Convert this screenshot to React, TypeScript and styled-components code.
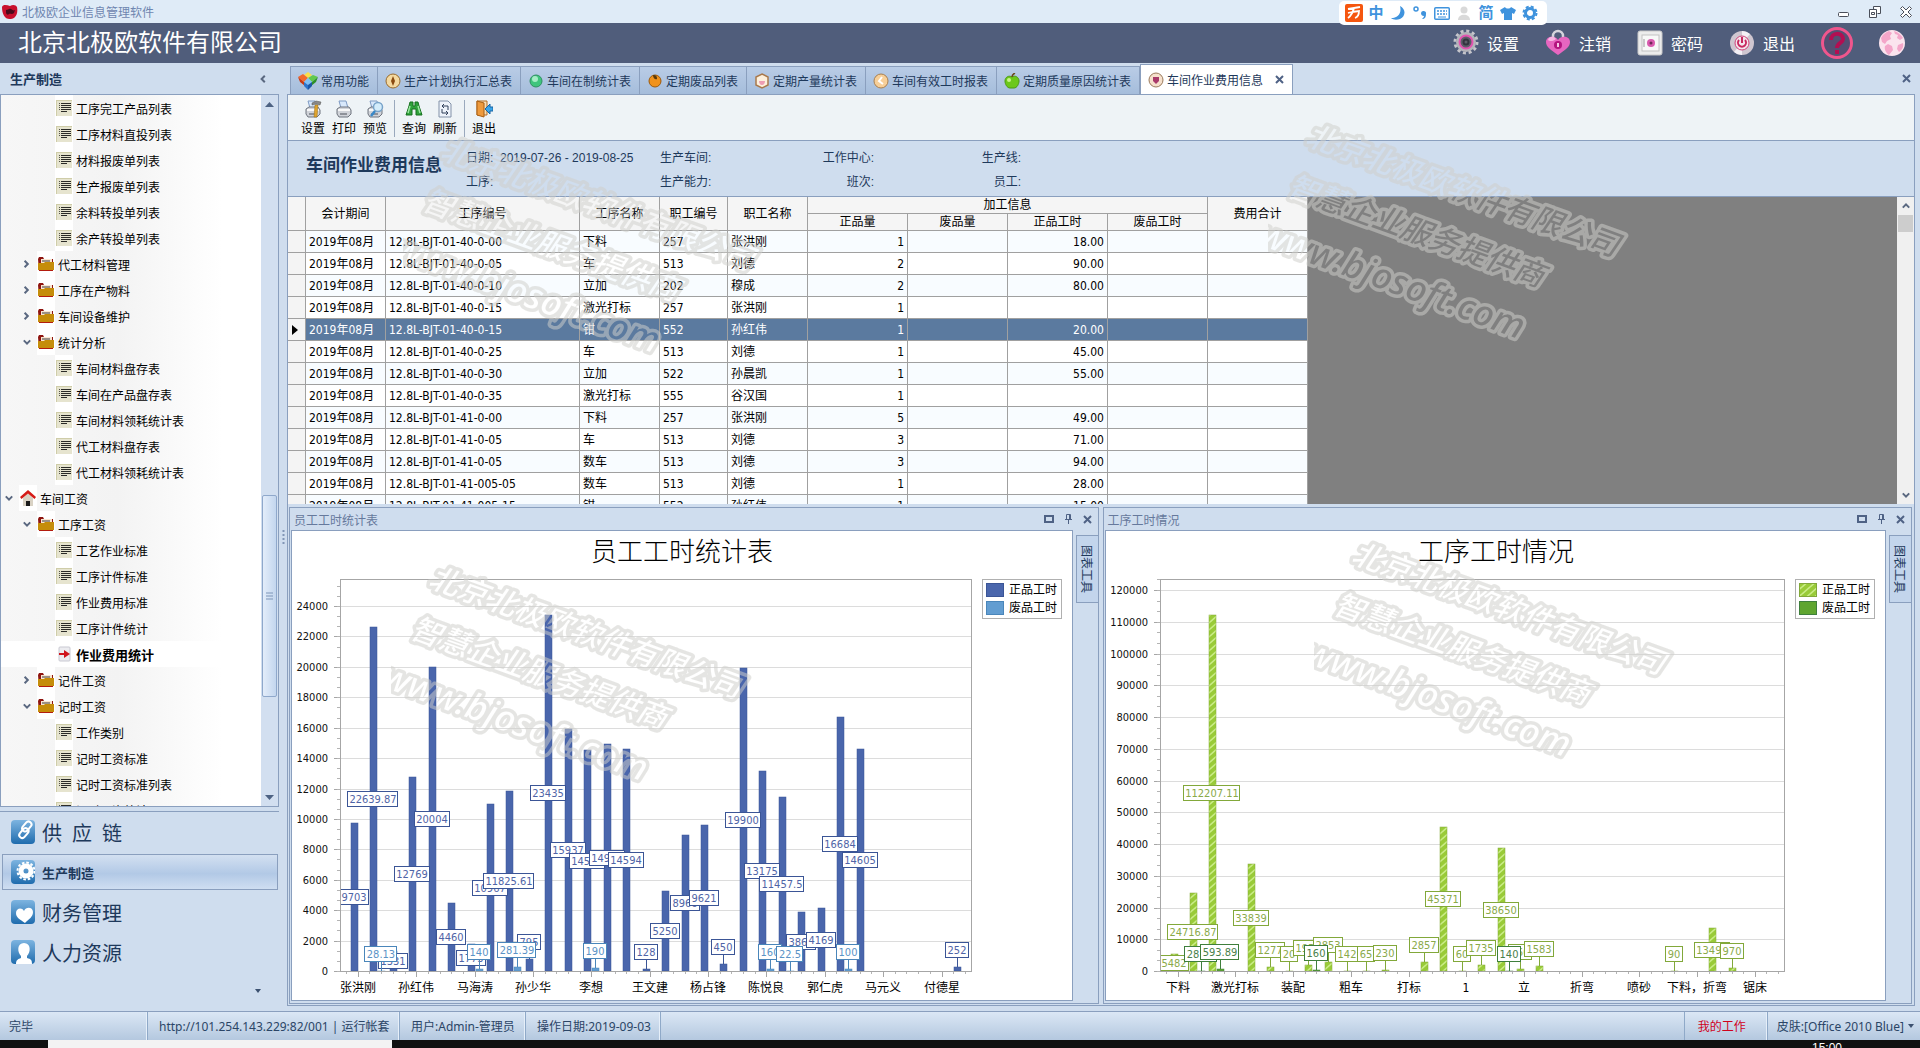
import React, { useLayoutEffect, useRef, useState } from 'react';
import styled, { createGlobalStyle, css } from 'styled-components';

const uiFont = '"Liberation Sans", "Noto Sans CJK SC", sans-serif';
const dataFont = '"DejaVu Sans Condensed", "Noto Sans", "Noto Sans CJK SC", sans-serif';
const line = '#8a9fbe';
const panelBlue = '#cfddee';
const ink = '#1e395b';

const GlobalStyle = createGlobalStyle`
  *, *::before, *::after { box-sizing: border-box; }
  body { margin: 0; background: ${panelBlue}; font-family: ${uiFont}; font-size: 12px; color: ${ink}; overflow: hidden; }
  button { font: inherit; color: inherit; background: none; border: 0; padding: 0; margin: 0; cursor: default; white-space: nowrap; }
  ul { list-style: none; margin: 0; padding: 0; }
  svg { display: block; flex: none; }
`;

const Page = styled.div`
  position: relative;
  height: 100vh;
  display: flex;
  flex-direction: column;
  overflow: hidden;
`;

/* ---------- title bar ---------- */
const TitleBar = styled.div`
  flex: none;
  height: 23px;
  display: flex;
  align-items: center;
  justify-content: space-between;
  padding: 0 8px 0 2px;
  background: #dfebf7;
  color: #6f86b0;
`;
const AppName = styled.div`
  display: flex;
  align-items: center;
  gap: 4px;
`;
const WindowControls = styled.div`
  display: flex;
  gap: 19px;
`;
const ImeBar = styled.div`
  position: absolute;
  right: 373px;
  top: 1px;
  height: 24px;
  display: flex;
  align-items: center;
  gap: 4px;
  padding: 0 8px 0 6px;
  background: #fff;
  border-radius: 5px;
  color: #3f93dd;
  font-size: 15px;
  font-weight: 700;
  line-height: 18px;
  z-index: 3;
`;
const ImeKey = styled.button`
  width: 18px;
  height: 20px;
  display: flex;
  align-items: center;
  justify-content: center;
`;

/* ---------- header ---------- */
const Header = styled.header`
  flex: none;
  height: 40px;
  display: flex;
  align-items: center;
  justify-content: space-between;
  padding: 0 15px 0 18px;
  background: #505d7b;
  color: #fff;
`;
const Company = styled.h1`
  margin: 0;
  font-size: 24px;
  line-height: 36px;
  font-weight: 400;
`;
const HeaderActions = styled.div`
  display: flex;
  align-items: center;
  gap: 26px;
`;
const HeaderButton = styled.button`
  display: flex;
  align-items: center;
  gap: 8px;
  font-size: 16px;
`;

/* ---------- body ---------- */
const Body = styled.div`
  flex: 1;
  min-height: 0;
  display: flex;
`;
const Sidebar = styled.aside`
  flex: none;
  width: 279px;
  display: flex;
  flex-direction: column;
`;
const SideHeader = styled.div`
  height: 31px;
  display: flex;
  align-items: center;
  justify-content: space-between;
  padding: 0 11px 0 10px;
  font-size: 13px;
  font-weight: 700;
`;
const TreeBox = styled.div`
  flex: 1;
  min-height: 0;
  display: flex;
  border: 1px solid ${line};
  background: #fff;
`;
const TreeList = styled.ul`
  flex: 1;
  overflow: hidden;
`;
const TreeRow = styled.li<{ $level: number; $active?: boolean }>`
  height: 26px;
  display: flex;
  align-items: center;
  padding-left: ${(p) => p.$level * 18}px;
  color: #000;
  font-weight: ${(p) => (p.$active ? 700 : 400)};
  font-size: ${(p) => (p.$active ? 13 : 12)}px;
  background: ${(p) => (p.$active ? '#fff' : 'linear-gradient(to right, #f7f7f7, #f3f3f3 45%, #fff 85%)')};
`;
const TreeToggle = styled.button`
  width: 16px;
  height: 26px;
  margin-right: 2px;
  display: flex;
  align-items: center;
  justify-content: center;
`;
const TreeIcon = styled.span`
  width: 18px;
  height: 26px;
  display: flex;
  align-items: center;
  justify-content: center;
  background: #fff;
`;
const TreeLabel = styled.button`
  padding-left: 3px;
`;
const TreeScroll = styled.div`
  width: 17px;
  display: flex;
  flex-direction: column;
  align-items: center;
  background: #d2dff0;
`;
const ScrollArrow = styled.button`
  flex: none;
  height: 18px;
  width: 100%;
  display: flex;
  align-items: center;
  justify-content: center;
`;
const TreeThumb = styled.div`
  width: 15px;
  height: 28.4%;
  border: 1px solid #8fa8cb;
  border-radius: 2px;
  background: linear-gradient(to right, #e3edfa, #c3d6ee);
  display: flex;
  align-items: center;
  justify-content: center;
`;
const Spacer = styled.div<{ $grow: number }>`
  flex: ${(p) => p.$grow} 1 0;
`;
const SideNav = styled.nav`
  flex: none;
  display: flex;
  flex-direction: column;
  gap: 4px;
  margin-top: 4px;
  padding: 2px 1px 0 2px;
  border-top: 1px solid ${line};
`;
const NavItem = styled.button<{ $active?: boolean }>`
  height: 36px;
  display: flex;
  align-items: center;
  gap: 7px;
  padding-left: 8px;
  border: 1px solid transparent;
  font-size: ${(p) => (p.$active ? 13 : 20)}px;
  font-weight: ${(p) => (p.$active ? 700 : 400)};
  white-space: pre;
  ${(p) =>
    p.$active &&
    css`
      border-color: ${line};
      background: linear-gradient(#d3e0f1, #b2c9e6 55%, #cfdef1);
    `}
`;
const NavFooter = styled.div`
  height: 37px;
  display: flex;
  align-items: flex-end;
  justify-content: flex-end;
  padding: 0 17px 18px 0;
`;
const Splitter = styled.div`
  flex: none;
  width: 8px;
  display: flex;
  align-items: center;
  justify-content: center;
`;

const Main = styled.main`
  flex: 1;
  min-width: 0;
  display: flex;
  flex-direction: column;
  padding: 0 5px 5px 0;
`;
const TabBar = styled.div`
  flex: none;
  height: 31px;
  display: flex;
  align-items: flex-end;
  padding-left: 3px;
`;
const Tab = styled.button<{ $active?: boolean }>`
  height: ${(p) => (p.$active ? 30 : 28)}px;
  display: flex;
  align-items: center;
  gap: 3px;
  padding: 0 8px 0 7px;
  border: 1px solid ${line};
  border-left-width: ${(p) => (p.$active ? 1 : 0)}px;
  border-bottom: 0;
  background: ${(p) => (p.$active ? '#fff' : 'linear-gradient(#b9cce6, #a5bddb)')};
  &:first-child { border-left-width: 1px; }
`;
const TabClose = styled.span`
  padding-left: 9px;
`;
const TabBarClose = styled.button`
  margin-left: auto;
  align-self: center;
  padding-right: 4px;
`;
const Workspace = styled.section`
  flex: 1;
  min-height: 0;
  display: flex;
  flex-direction: column;
  border: 1px solid ${line};
`;
const Toolbar = styled.div`
  flex: none;
  height: 46px;
  display: flex;
  align-items: center;
  gap: 7px;
  padding: 2px 13px 0;
  background: #eef3f6;
  border-bottom: 1px solid ${line};
`;
const ToolButton = styled.button`
  display: flex;
  flex-direction: column;
  align-items: center;
  gap: 2px;
  color: #000;
  line-height: 18px;
`;
const ToolDivider = styled.span`
  width: 1px;
  height: 37px;
  background: #9aa9bd;
`;

const InfoBar = styled.div`
  flex: none;
  height: 56px;
  display: flex;
  align-items: center;
  padding-left: 18px;
  border-bottom: 1px solid ${line};
`;
const InfoTitle = styled.h2`
  margin: 0 24px 6px 0;
  font-size: 17px;
  line-height: 24px;
  font-weight: 700;
`;
const InfoGrid = styled.div`
  display: grid;
  grid-template-columns: 194px 120px 94px 147px;
  grid-auto-rows: 24px;
  align-items: center;
`;
const InfoField = styled.span<{ $end?: boolean }>`
  text-align: ${(p) => (p.$end ? 'right' : 'left')};
  white-space: pre;
`;

/* ---------- grid ---------- */
const GridArea = styled.div`
  flex: 309 1 0;
  min-height: 0;
  display: flex;
  background: #808080;
`;
const GridViewport = styled.div`
  flex: 1;
  min-width: 0;
  overflow: hidden;
`;
const Table = styled.table`
  border-collapse: separate;
  border-spacing: 0;
  table-layout: fixed;
  width: 1020px;
  background: #fff;
  color: #000;
  font-family: ${dataFont};
  font-size: 12px;
`;
const Th = styled.th`
  height: 17px;
  padding: 0;
  font-weight: 400;
  line-height: 16px;
  background: #f5f5f5;
  border-right: 1px solid #a0a0a0;
  border-bottom: 1px solid #a0a0a0;
`;
const Tr = styled.tr<{ $selected?: boolean }>`
  background: #fff;
  &:nth-child(odd) { background: #f8fcff; }
  ${(p) =>
    p.$selected &&
    css`
      &&, &&:nth-child(odd) { background: #5b7a9f; color: #fff; }
    `}
`;
const Td = styled.td<{ $num?: boolean }>`
  height: 22px;
  padding: 0 3px;
  line-height: 20px;
  white-space: nowrap;
  overflow: hidden;
  text-align: ${(p) => (p.$num ? 'right' : 'left')};
  border-right: 1px solid #a0a0a0;
  border-bottom: 1px solid #a0a0a0;
`;
const RowMark = styled(Td)`
  background: #f4f4f4;
  padding: 0 4px;
`;
const GridScroll = styled.div`
  width: 17px;
  display: flex;
  flex-direction: column;
  align-items: center;
  background: #f0f0f0;
`;
const GridThumb = styled.div`
  width: 15px;
  height: 17px;
  background: #cdcdcd;
`;

/* ---------- charts ---------- */
const ChartRow = styled.div`
  flex: 499 1 0;
  min-height: 0;
  display: grid;
  grid-template-columns: 1fr 1fr;
  gap: 4px;
  padding: 3px 2px 1px 1px;
`;
const Panel = styled.section`
  min-width: 0;
  display: flex;
  flex-direction: column;
  border: 1px solid ${line};
`;
const PanelHead = styled.div`
  flex: none;
  height: 22px;
  display: flex;
  align-items: center;
  justify-content: space-between;
  padding: 0 6px 0 4px;
  color: #66799c;
`;
const PanelTools = styled.div`
  display: flex;
  align-items: center;
  gap: 10px;
`;
const PanelBody = styled.div`
  flex: 1;
  min-height: 0;
  display: flex;
  padding: 0 0 2px 1px;
`;
const Canvas = styled.div`
  flex: 1;
  min-width: 0;
  overflow: hidden;
  border: 1px solid ${line};
  background: #fff;
`;
const SideTabs = styled.div`
  flex: none;
  width: 25px;
  padding: 5px 0 0 3px;
`;
const SideTab = styled.button`
  width: 22px;
  height: 68px;
  writing-mode: vertical-rl;
  text-orientation: sideways;
  border: 1px solid ${line};
  border-right: 0;
  background: #c3d5ec;
`;

/* ---------- status bar ---------- */
const StatusBar = styled.footer`
  flex: none;
  height: 29px;
  display: flex;
  align-items: stretch;
  border-top: 1px solid ${line};
  background: linear-gradient(#dbe7f5, #b4c8df);
  color: #2b4566;
  font-family: "Noto Sans", "Noto Sans CJK SC", sans-serif;
`;
const StatusCell = styled.div<{ $min?: number; $right?: boolean; $red?: boolean }>`
  display: flex;
  align-items: center;
  gap: 4px;
  min-width: ${(p) => p.$min ?? 0}px;
  margin-left: ${(p) => (p.$right ? 'auto' : 0)};
  padding: 0 9px 0 ${(p) => (p.$right ? 13 : 11)}px;
  white-space: pre;
  color: ${(p) => (p.$red ? '#d0021b' : 'inherit')};
  border-left: ${(p) => (p.$right ? 1 : 0)}px solid #8fa9c8;
  border-right: 1px solid #8fa9c8;
  box-shadow: inset -1px 0 0 #e6eff9;
  &:first-child { padding-left: 9px; }
  &:last-child { border-right: 0; box-shadow: none; padding: 0 6px 0 9px; }
`;
const TaskBar = styled.div`
  flex: none;
  height: 8px;
  display: flex;
  justify-content: space-between;
  overflow: hidden;
  padding: 0 78px 0 48px;
  background: #101010;
  color: #fff;
  font-size: 12px;
  line-height: 16px;
`;
const TaskSearch = styled.div`
  width: 344px;
  background: #f3f3f3;
`;

const Mark = styled.svg<{ $x: number; $y: number }>`
  position: absolute;
  left: ${(p) => p.$x}px;
  top: ${(p) => p.$y}px;
  pointer-events: none;
  z-index: 2;
`;

/* ---------- small glyphs ---------- */
const Cross = ({ size = 9, color = '#4f6285' }: { size?: number; color?: string }) => (
  <svg width={size} height={size} viewBox="0 0 9 9">
    <path d="M1 1l7 7M8 1l-7 7" stroke={color} strokeWidth="2" />
  </svg>
);
const Tri = ({ up }: { up?: boolean }) => (
  <svg width="9" height="5" viewBox="0 0 9 5">
    <path d={up ? 'M0 5L4.500 0L9 5z' : 'M0 0h9L4.500 5z'} fill="#4d6283" />
  </svg>
);
const Caret = () => (
  <svg width="6" height="4" viewBox="0 0 6 4">
    <path d="M0 0h6L3 4z" fill="#3c5170" />
  </svg>
);
const Chevron = ({ d }: { d: 'left' | 'right' | 'down' | 'up' }) => {
  const paths = { left: 'M6 1L2 5l4 4', right: 'M2 1l4 4-4 4', down: 'M1 3l4 4 4-4', up: 'M1 7l4-4 4 4' };
  return (
    <svg width="8" height="8" viewBox="0 0 10 10">
      <path d={paths[d]} fill="none" stroke="#5a6880" strokeWidth="2.500" />
    </svg>
  );
};
const DocIcon = () => (
  <svg width="16" height="16" viewBox="0 0 16 16" shapeRendering="crispEdges">
    <rect width="16" height="16" fill="#e6e4cf" />
    <path d="M0 0h16v1H0zM0 0h1v16H0z" fill="#cfcda9" />
    <path d="M5 3h10v1H5zM5 5h10v1H5zM5 7h10v1H5zM5 9h10v1H5zM5 11h6v1H5z" fill="#2b2b28" />
    <path d="M3 3h1v1H3zM3 5h1v1H3zM3 7h1v1H3zM3 9h1v1H3z" fill="#55554a" />
  </svg>
);
const FolderIcon = () => (
  <svg width="16" height="16" viewBox="0 0 16 16">
    <path d="M0 3l1-2h4l1 2h9v12H1z" fill="#8e1510" />
    <path d="M3 3h11v5H3z" fill="#f9e6d2" />
    <path d="M4 5h8" stroke="#3d3d3d" />
    <path d="M0 7h6l1-1h9v8H0z" fill="#c58d0a" />
    <path d="M1 14h14v1H1z" fill="#b31c0e" />
  </svg>
);
const HomeIcon = () => (
  <svg width="16" height="16" viewBox="0 0 16 16">
    <path d="M3 8l5-5 5 5v8H3z" fill="#d9d2c4" />
    <path d="M8 0l8 7-1.500 2L8 3.500 1.500 9 0 7z" fill="#d51b17" />
    <rect x="6" y="11" width="4" height="5" fill="#1a1a1a" />
  </svg>
);
const GoIcon = () => (
  <svg width="16" height="16" viewBox="0 0 16 16">
    <rect x="3" y="1" width="11" height="14" rx="1" fill="#ececf0" stroke="#c9c9d2" />
    <path d="M3 7h5V4l6 4-6 4V9H3z" fill="#d0141c" />
  </svg>
);

const NavBadge = ({ kind }: { kind: string }) => (
  <svg width="24" height="24" viewBox="0 0 24 24">
    <defs>
      <linearGradient id={'nb' + kind} x1="0" y1="0" x2="0" y2="1">
        <stop offset="0" stopColor="#7db4e0" />
        <stop offset="1" stopColor="#1f6cae" />
      </linearGradient>
    </defs>
    <rect width="24" height="24" rx="4" fill={`url(#nb${kind})`} />
    {kind === 'link' && (
      <g fill="none" stroke="#fff" strokeWidth="2" transform="rotate(-50 15 9)">
        <rect x="5" y="7" width="11" height="6" rx="3" />
        <rect x="12" y="5" width="11" height="6" rx="3" />
      </g>
    )}
    {kind === 'gear' && (
      <>
        <circle cx="15" cy="11" r="5" fill="none" stroke="#fff" strokeWidth="5" />
        <circle cx="15" cy="11" r="8.500" fill="none" stroke="#fff" strokeWidth="2" strokeDasharray="2.600 1.850" />
      </>
    )}
    {kind === 'heart' && <path d="M14 23C9 19 5 18 5 13c0-5 6-6 8-2 2-5 9-4 9 1 0 5-4 7-8 11z" fill="#fff" />}
    {kind === 'user' && (
      <path d="M5 24c0-4 2-5 5-6v-2C6 12 6 3 13 3s7 9 3 13v2c4 1 5 2 5 6z" fill="#fff" />
    )}
  </svg>
);

const HeaderIcon = ({ kind }: { kind: string }) => {
  if (kind === 'gear')
    return (
      <svg width="26" height="28" viewBox="0 0 26 28">
        <circle cx="13" cy="13" r="11" fill="none" stroke="#c5c5cb" strokeWidth="3" strokeDasharray="3 2.750" />
        <circle cx="13" cy="13" r="10" fill="#b4b4ba" />
        <circle cx="13" cy="13" r="6.500" fill="#5d5d69" stroke="#e255b0" strokeWidth="2" />
        <circle cx="13" cy="13" r="2.500" fill="none" stroke="#34343f" strokeWidth="2" />
      </svg>
    );
  if (kind === 'lock')
    return (
      <svg width="26" height="28" viewBox="0 0 26 28">
        <path d="M8 11V7a5 5 0 0 1 10 0v4" fill="none" stroke="#d5d5dc" strokeWidth="2.500" />
        <path d="M13 26C6 21 1 18 1 13c0-6 9-7 12-2 3-5 12-4 12 2 0 5-5 8-12 13z" fill="#e766c0" />
        <path d="M3 11c1-4 6-4 8-1-2 2-6 3-8 1z" fill="#f6b5e2" />
        <circle cx="13" cy="16" r="4" fill="#b3157f" />
        <path d="M13 14v4" stroke="#f6c5e6" strokeWidth="2" />
      </svg>
    );
  if (kind === 'safe')
    return (
      <svg width="26" height="28" viewBox="0 0 26 28">
        <rect x="1" y="2" width="24" height="24" rx="2" fill="#ececec" stroke="#c8c8c8" />
        <rect x="5" y="6" width="17" height="16" fill="#f8f8f8" stroke="#c2c2c2" />
        <circle cx="14" cy="14" r="4" fill="#d95aae" />
        <circle cx="14" cy="14" r="1.500" fill="#6d2a57" />
        <path d="M7 10v8" stroke="#999" />
      </svg>
    );
  return (
    <svg width="26" height="28" viewBox="0 0 26 28">
      <circle cx="13" cy="14" r="12" fill="#cfc6d0" />
      <path d="M13 2a12 12 0 0 1 8 3l-8 9zM13 26a12 12 0 0 1-8-3l8-9z" fill="#f4f0f5" />
      <circle cx="13" cy="14" r="7" fill="#f4e3ec" stroke="#d0447a" />
      <path d="M10 11a4 4 0 1 0 6 0M13 8v6" fill="none" stroke="#c8285f" strokeWidth="2" />
    </svg>
  );
};
const HelpIcon = () => (
  <svg width="32" height="32" viewBox="0 0 32 32">
    <circle cx="16" cy="16" r="14.500" fill="#554f73" stroke="#f0568d" strokeWidth="3" />
    <path d="M10 13c0-8 12-8 12-1 0 4-6 4-6 9" fill="none" stroke="#b30e52" strokeWidth="4" />
    <rect x="14" y="23" width="4" height="4" fill="#b30e52" />
  </svg>
);
const GlobeIcon = () => (
  <svg width="26" height="28" viewBox="0 0 26 28">
    <ellipse cx="13" cy="14" rx="13" ry="13" fill="#fbe4ee" />
    <path d="M2 9c2-4 5-6 8-7l3 2-2 3 1 3-4 2-2 3-3-2zM15 2c4 1 7 4 9 7l-3 2-3-2 1-3-3-1zM9 15l4 2 1 4-4 5c-3-2-5-6-4-9zM19 16l5-2c1 4-1 7-4 9l-2-3z" fill="#f4a6c9" />
  </svg>
);

const ToolIcon = ({ kind }: { kind: string }) => {
  const printer = (
    <>
      <path d="M4 1h7l2 7H6z" fill="#d8e8fb" stroke="#7f9bc4" />
      <path d="M2 9l3-2h9l2 3v4l-3 3H4l-2-3z" fill="#d0d3d9" stroke="#6f747e" />
      <path d="M3 10h12" stroke="#f8f8f8" strokeWidth="2" />
      <path d="M5 14h7" stroke="#4c515a" strokeWidth="1" />
    </>
  );
  return (
    <svg width="18" height="18" viewBox="0 0 18 18">
      {(kind === 'setup' || kind === 'print' || kind === 'preview') && printer}
      {kind === 'setup' && (
        <>
          <path d="M8 3l4-2 5 1-1 3-4-1-4 1z" fill="#8a8a8a" stroke="#555" strokeWidth="0.500" />
          <path d="M11 5h3l-1 12h-3z" fill="#e0a42e" stroke="#9b6c10" strokeWidth="0.500" />
        </>
      )}
      {kind === 'preview' && (
        <>
          <circle cx="12" cy="7" r="4.500" fill="#d3ecfb" stroke="#78a3c9" strokeWidth="1.500" />
          <path d="M9 11l-4 5" stroke="#3889c9" strokeWidth="2.500" />
        </>
      )}
      {kind === 'find' && (
        <>
          <path d="M5 2h3v4h2V2h3l1 4 3 9h-6V9H7v6H1l3-9z" fill="#2fa23a" stroke="#17701f" />
          <path d="M5 6l-2 7M13 6l2 7" stroke="#9be6a0" strokeWidth="1.500" />
        </>
      )}
      {kind === 'refresh' && (
        <>
          <path d="M3 1h9l3 3v13H3z" fill="#eef3fa" stroke="#8291a8" />
          <path d="M6 6h6v4M12 13H6V9M8 4L6 6l2 2M10 11l2 2-2 2" fill="none" stroke="#31405a" />
        </>
      )}
      {kind === 'exit' && (
        <>
          <path d="M2 1h10v14H2z" fill="#f7ddb5" stroke="#b56d1e" />
          <path d="M2 1l7 2v14l-7-2z" fill="#ee9a3c" stroke="#a85f14" />
          <path d="M18 7v4h-3v3l-5-5 5-5v3z" fill="#39a4e8" stroke="#1665a5" />
        </>
      )}
    </svg>
  );
};

const TabIcon = ({ kind }: { kind: string }) => {
  if (kind === 'cubes')
    return (
      <svg width="20" height="18" viewBox="0 0 20 18">
        <path d="M10 0l4 3-4 3-4-3z" fill="#fbe04a" />
        <path d="M0 5l5-3 5 4-4 4z" fill="#f26a2c" />
        <path d="M0 5l6 5 1 4-5-4z" fill="#c93a12" />
        <path d="M20 5l-5-2-5 3 4 4z" fill="#62c94c" />
        <path d="M20 5l-6 5-1 4 5-4z" fill="#2c8f28" />
        <path d="M10 6l4 4-4 3-4-3z" fill="#7fc0f5" />
        <path d="M6 10l4 3v5l-4-4z" fill="#2e74cc" />
        <path d="M14 10l-4 3v5l4-4z" fill="#1b57a8" />
      </svg>
    );
  if (kind === 'hex')
    return (
      <svg width="16" height="16" viewBox="0 0 16 16">
        <path d="M8 1l6 3v8l-6 3-6-3V4z" fill="#fdf0dc" stroke="#a9794c" strokeWidth="1.500" />
        <path d="M5 8h6c0 2-1 4-3 4S5 10 5 8z" fill="#ee9db2" />
      </svg>
    );
  if (kind === 'apple')
    return (
      <svg width="16" height="16" viewBox="0 0 16 16">
        <path d="M8 4c3-2 7 0 7 4 0 3-2 7-5 7H6c-3 0-5-4-5-7 0-4 4-6 7-4z" fill="#6cc81a" stroke="#4a9a10" />
        <path d="M8 4c0-2 1-3 3-4" fill="none" stroke="#6b4a1a" strokeWidth="1.500" />
        <ellipse cx="5" cy="7" rx="2" ry="2" fill="#c8f48a" />
      </svg>
    );
  const face: Record<string, [string, string]> = {
    compass: ['#f4d9a0', '#9a6b2c'],
    green: ['#3fc57c', '#2f8f62'],
    orange: ['#f0921c', '#9c5a0c'],
    clock: ['#f7cf98', '#a98050'],
    shield: ['#f5e0cc', '#9a7a5c'],
  };
  const [fill, edge] = face[kind];
  return (
    <svg width="16" height="16" viewBox="0 0 16 16">
      <circle cx="8" cy="8" r={kind === 'green' || kind === 'orange' ? 6 : 7} fill={fill} stroke={edge} />
      {kind === 'compass' && <path d="M8 3l2 5-2 5-2-5z" fill="#8a4a10" />}
      {kind === 'green' && <ellipse cx="7" cy="6" rx="3" ry="3" fill="#a6ecc6" />}
      {kind === 'orange' && <path d="M6 2c3 0 4 1 4 4-2 1-4-1-4-4z" fill="#5a3a0a" />}
      {kind === 'clock' && <path d="M9 4L6 8l4 3" fill="none" stroke="#fff" strokeWidth="2" />}
      {kind === 'shield' && <path d="M5 5h6v4l-3 3-3-3z" fill="#a83a6a" />}
    </svg>
  );
};

const BrandIcon = () => (
  <svg width="16" height="16" viewBox="0 0 16 16">
    <path d="M0 3c1-3 5-2 8-1 3-2 6-1 7 1 1 5 0 11-6 12C3 16 0 10 0 3z" fill="#c8102e" />
    <path d="M4 6c2 0 3-2 5-1s2 2 4 1l-1 3c-2 2-4 0-5 1s-2 1-3-1z" fill="#4a0b1c" />
  </svg>
);

/* ---------- chart ---------- */
type Point = [number, number, string];
interface ChartSpec {
  id: string;
  title: string;
  left: number;
  right: number;
  max: number;
  step: number;
  fill: [string, string];
  edge: [string, string];
  text: [string, string];
  hatch?: boolean;
  categories: string[];
  first: Point[];
  second: Point[];
}

const staffChart: ChartSpec = {
  id: 'staff',
  title: '员工工时统计表',
  left: 48,
  right: 101,
  max: 25780,
  step: 2000,
  fill: ['#4a66ac', '#629dd1'],
  edge: ['#3b5596', '#4a86ba'],
  text: ['#4f64a6', '#5b93c6'],
  categories: ['张洪刚', '孙红伟', '马海涛', '孙少华', '李想', '王文建', '杨占锋', '陈悦良', '郭仁虎', '马元义', '付德星'],
  first: [
    [0, 9703, '9703'], [1, 22639.87, '22639.87'], [2, 1331, '1331'], [3, 12769, '12769'], [4, 20004, '20004'],
    [5, 4460, '4460'], [6, 1773, '1773'], [7, 10967, '10967'], [8, 11825.61, '11825.61'], [9, 795, '795'],
    [10, 23435, '23435'], [11, 15937, '15937'], [12, 14530, '14530'], [13, 14940, '14940'], [14, 14594, '14594'],
    [15, 128, '128'], [16, 5250, '5250'], [17, 8966, '8966'], [18, 9621, '9621'], [19, 450, '450'],
    [20, 19900, '19900'], [21, 13175, '13175'], [22, 11457.5, '11457.5'], [23, 3865, '3865'], [24, 4169, '4169'],
    [25, 16684, '16684'], [26, 14605, '14605'], [31, 252, '252'],
  ],
  second: [
    [1, 28.13, '28.13'], [6, 140, '140'], [8, 281.39, '281.39'], [12, 190, '190'], [21, 160, '160'],
    [22, 22.5, '22.5'], [25, 100, '100'],
  ],
};

const processChart: ChartSpec = {
  id: 'process',
  title: '工序工时情况',
  left: 54,
  right: 102,
  max: 123465,
  step: 10000,
  fill: ['#99cb38', '#5fa530'],
  edge: ['#82a83a', '#3f7f3c'],
  text: ['#8aaa4a', '#4a7f4a'],
  hatch: true,
  categories: ['下料', '激光打标', '装配', '粗车', '打标', '1', '立', '折弯', '喷砂', '下料，折弯', '锯床'],
  first: [
    [0, 5482, '5482'], [1, 24716.87, '24716.87'], [2, 112207.11, '112207.11'], [4, 33839, '33839'],
    [5, 1277, '1277'], [6, 20, '20'], [7, 1950, '1950'], [8, 2853, '2853'], [9, 142, '142'], [10, 65, '65'],
    [11, 230, '230'], [13, 2857, '2857'], [14, 45371, '45371'], [15, 60, '60'], [16, 1735, '1735'],
    [17, 38650, '38650'], [18, 760, '760'], [19, 1583, '1583'], [26, 90, '90'], [28, 13490, '13490'], [29, 970, '970'],
  ],
  second: [[1, 28.13, '28.13'], [2, 593.89, '593.89'], [7, 160, '160'], [17, 140, '140']],
};

function Chart({ spec }: { spec: ChartSpec }) {
  const host = useRef<HTMLDivElement>(null);
  const [size, setSize] = useState({ w: 780, h: 469 });
  useLayoutEffect(() => {
    const el = host.current;
    if (!el) return;
    const read = () => setSize({ w: el.clientWidth, h: el.clientHeight });
    read();
    const ro = new ResizeObserver(read);
    ro.observe(el);
    return () => ro.disconnect();
  }, []);

  const { w, h } = size;
  const x0 = spec.left;
  const x1 = w - spec.right;
  const y0 = 48;
  const y1 = h - 29;
  const pitch = (x1 - x0) / 32.43;
  const tickX = (i: number) => x0 + pitch * (0.915 + i);
  const yOf = (v: number) => Math.round(y1 - (v / spec.max) * (y1 - y0));
  const majors: number[] = [];
  for (let v = 0; v <= spec.max; v += spec.step) majors.push(v);
  const minors: number[] = [];
  for (let v = 0; v <= spec.max; v += spec.step / 3) minors.push(v);
  const minorX: number[] = [];
  for (let i = -0.6; i < 31.5; i += 0.6) minorX.push(i);
  const centreLimit = (16 / (y1 - y0)) * spec.max;

  const bars = (pts: Point[], s: 0 | 1) =>
    pts.map(([i, v]) => {
      const cx = Math.round(tickX(i) + (s ? 4 : -4));
      const top = yOf(v);
      return (
        <rect
          key={`${s}-${i}`}
          x={cx - 3}
          y={top}
          width={7}
          height={Math.max(1, y1 - top)}
          fill={s === 0 && spec.hatch ? `url(#hatch-${spec.id})` : spec.fill[s]}
          stroke={spec.edge[s]}
          strokeWidth="0.500"
        />
      );
    });

  const tags = (pts: Point[], s: 0 | 1) =>
    pts.map(([i, v, label]) => {
      const cx = Math.round(tickX(i) + (s ? 4 : -4));
      const top = yOf(v);
      const inside = v > centreLimit;
      const cy = inside ? Math.round((top + y1) / 2) : top - 17;
      const dots = label.includes('.') ? 1 : 0;
      const bw = (label.length - dots) * 6 + dots * 3 + 6;
      const bx = cx - Math.round(bw / 2);
      return (
        <g key={`${s}-${i}`}>
          {!inside && <path d={`M${cx + 0.5} ${cy + 8}V${top}`} stroke={spec.edge[s]} />}
          <rect x={bx + 0.5} y={cy - 7.5} width={bw - 1} height={15} fill="#fff" stroke={spec.edge[s]} />
          <text x={cx} y={cy + 4} textAnchor="middle" fill={spec.text[s]}>
            {label}
          </text>
        </g>
      );
    });

  return (
    <Canvas ref={host}>
      <svg width={w} height={h} fontFamily={dataFont.replace(/"/g, "'")} fontSize="11" role="img" aria-label={spec.title}>
        <defs>
          <pattern id={`hatch-${spec.id}`} width="8" height="7" patternUnits="userSpaceOnUse">
            <rect width="8" height="7" fill={spec.fill[0]} />
            <path d="M-1 8L9 -1M-1 1L1 -1M7 8l2-2" stroke="#c9ec86" strokeWidth="1.500" />
          </pattern>
          <clipPath id={`clip-${spec.id}`}>
            <rect x={x0} y={y0} width={x1 - x0} height={y1 - y0} />
          </clipPath>
        </defs>
        <text x={w / 2} y={30} textAnchor="middle" fontSize="26" fontWeight="300" fill="#000">
          {spec.title}
        </text>
        {majors.map((v) => (
          <g key={v}>
            <path d={`M${x0} ${yOf(v) + 0.5}H${x1}`} stroke="#dcdcdc" />
            <path d={`M${x0 - 6} ${yOf(v) + 0.5}h6`} stroke="#a6a6a6" />
            <text x={x0 - 12} y={yOf(v) + 4} textAnchor="end" fill="#111">
              {v}
            </text>
          </g>
        ))}
        {minors.map((v) => (
          <path key={v} d={`M${x0 - 3} ${yOf(v) + 0.5}h3`} stroke="#b4b4b4" />
        ))}
        {minorX.map((i) => (
          <path key={i} d={`M${Math.round(tickX(i)) + 0.5} ${y1}v3`} stroke="#b4b4b4" />
        ))}
        <g clipPath={`url(#clip-${spec.id})`}>
          {bars(spec.first, 0)}
          {bars(spec.second, 1)}
          {tags(spec.first, 0)}
          {tags(spec.second, 1)}
        </g>
        <rect x={x0 + 0.5} y={y0 + 0.5} width={x1 - x0} height={y1 - y0} fill="none" stroke="#a6a6a6" />
        {spec.categories.map((c, k) => (
          <g key={c + k}>
            <path d={`M${Math.round(tickX(k * 3)) + 0.5} ${y1}v6`} stroke="#a6a6a6" />
            <text x={Math.round(tickX(k * 3))} y={y1 + 21} textAnchor="middle" fontSize="12" fill="#000">
              {c}
            </text>
          </g>
        ))}
        <rect x={x1 + 11.5} y={y0 + 0.5} width={79} height={39} fill="#fff" stroke="#b0b0b0" />
        {['正品工时', '废品工时'].map((t, s) => (
          <g key={t}>
            <rect
              x={x1 + 15.5}
              y={y0 + 4.5 + s * 18}
              width={17}
              height={13}
              fill={s === 0 && spec.hatch ? `url(#hatch-${spec.id})` : spec.fill[s]}
              stroke={spec.edge[s]}
            />
            <text x={x1 + 38} y={y0 + 15 + s * 18} fontSize="12" fill="#000">
              {t}
            </text>
          </g>
        ))}
      </svg>
    </Canvas>
  );
}

function ChartPanel({ caption, spec }: { caption: string; spec: ChartSpec }) {
  return (
    <Panel>
      <PanelHead>
        {caption}
        <PanelTools>
          <button aria-label="最大化">
            <svg width="10" height="8" viewBox="0 0 10 8">
              <rect x="1" y="1" width="8" height="6" fill="none" stroke="#4f6285" strokeWidth="2" />
            </svg>
          </button>
          <button aria-label="固定">
            <svg width="9" height="10" viewBox="0 0 9 10">
              <path d="M2.500 0.500h4v5h-4zM1 5.500h7M4.500 6v4M5.500 1v4" fill="none" stroke="#4f6285" />
            </svg>
          </button>
          <button aria-label="关闭">
            <Cross />
          </button>
        </PanelTools>
      </PanelHead>
      <PanelBody>
        <Chart spec={spec} />
        <SideTabs>
          <SideTab>图表工具</SideTab>
        </SideTabs>
      </PanelBody>
    </Panel>
  );
}

function Watermark({ x, y, id }: { x: number; y: number; id: string }) {
  return (
    <Mark $x={x} $y={y} width="380" height="260" viewBox="0 0 380 260">
      <mask id={id} maskUnits="userSpaceOnUse" x="0" y="0" width="380" height="260">
        <g
          transform="rotate(20 40 30)"
          fontFamily="'Noto Sans', 'Noto Sans CJK SC', sans-serif"
          fontSize="30"
          fontStyle="italic"
          fontWeight="500"
          fill="#000"
          stroke="#fff"
          strokeWidth="7"
          strokeLinejoin="round"
          style={{ paintOrder: 'stroke' }}
        >
          <text x="38" y="36">北京北极欧软件有限公司</text>
          <text x="38" y="90">智慧企业服务提供商</text>
          <text x="28" y="146" fontSize="36">www.bjosoft.com</text>
        </g>
      </mask>
      <rect width="380" height="260" fill="#cfcfcb" opacity="0.520" mask={`url(#${id})`} />
    </Mark>
  );
}

/* ---------- data ---------- */
type Node = { t: string; level: 0 | 1 | 2; open?: boolean; active?: boolean };
const tree: Node[] = [
  ...['工序完工产品列表', '工序材料直投列表', '材料报废单列表', '生产报废单列表', '余料转投单列表', '余产转投单列表'].map(
    (t) => ({ t, level: 2 }) as Node,
  ),
  { t: '代工材料管理', level: 1 },
  { t: '工序在产物料', level: 1 },
  { t: '车间设备维护', level: 1 },
  { t: '统计分析', level: 1, open: true },
  { t: '车间材料盘存表', level: 2 },
  { t: '车间在产品盘存表', level: 2 },
  { t: '车间材料领耗统计表', level: 2 },
  { t: '代工材料盘存表', level: 2 },
  { t: '代工材料领耗统计表', level: 2 },
  { t: '车间工资', level: 0, open: true },
  { t: '工序工资', level: 1, open: true },
  { t: '工艺作业标准', level: 2 },
  { t: '工序计件标准', level: 2 },
  { t: '作业费用标准', level: 2 },
  { t: '工序计件统计', level: 2 },
  { t: '作业费用统计', level: 2, active: true },
  { t: '记件工资', level: 1 },
  { t: '记时工资', level: 1, open: true },
  { t: '工作类别', level: 2 },
  { t: '记时工资标准', level: 2 },
  { t: '记时工资标准列表', level: 2 },
  { t: '记时工资统计', level: 2 },
];

const tabs = [
  ['cubes', '常用功能'],
  ['compass', '生产计划执行汇总表'],
  ['green', '车间在制统计表'],
  ['orange', '定期废品列表'],
  ['hex', '定期产量统计表'],
  ['clock', '车间有效工时报表'],
  ['apple', '定期质量原因统计表'],
  ['shield', '车间作业费用信息'],
];

const rows = [
  ['12.8L-BJT-01-40-0-00', '下料', '257', '张洪刚', '1', '18.00'],
  ['12.8L-BJT-01-40-0-05', '车', '513', '刘德', '2', '90.00'],
  ['12.8L-BJT-01-40-0-10', '立加', '202', '穆成', '2', '80.00'],
  ['12.8L-BJT-01-40-0-15', '激光打标', '257', '张洪刚', '1', ''],
  ['12.8L-BJT-01-40-0-15', '钳', '552', '孙红伟', '1', '20.00'],
  ['12.8L-BJT-01-40-0-25', '车', '513', '刘德', '1', '45.00'],
  ['12.8L-BJT-01-40-0-30', '立加', '522', '孙晨凯', '1', '55.00'],
  ['12.8L-BJT-01-40-0-35', '激光打标', '555', '谷汉国', '1', ''],
  ['12.8L-BJT-01-41-0-00', '下料', '257', '张洪刚', '5', '49.00'],
  ['12.8L-BJT-01-41-0-05', '车', '513', '刘德', '3', '71.00'],
  ['12.8L-BJT-01-41-0-05', '数车', '513', '刘德', '3', '94.00'],
  ['12.8L-BJT-01-41-005-05', '数车', '513', '刘德', '1', '28.00'],
  ['12.8L-BJT-01-41-005-15', '钳', '552', '孙红伟', '1', '15.00'],
];
const columns = [18, 80, 194, 80, 68, 80, 100, 100, 100, 100, 100];

export default function App() {
  return (
    <>
      <GlobalStyle />
      <Page>
        <TitleBar>
          <AppName>
            <BrandIcon />
            北极欧企业信息管理软件
          </AppName>
          <WindowControls>
            <button aria-label="最小化">
              <svg width="12" height="12" viewBox="0 0 12 12">
                <rect x="0.500" y="6.500" width="10" height="4" rx="1" fill="#fff" stroke="#4a4f5a" />
              </svg>
            </button>
            <button aria-label="还原">
              <svg width="12" height="12" viewBox="0 0 12 12">
                <path d="M4.500 0.500h7v7h-3M4.500 0.500v3M0.500 3.500h7v8h-7zM2.500 6.500h3v2h-3z" fill="#fff" stroke="#4a4f5a" />
              </svg>
            </button>
            <button aria-label="关闭">
              <svg width="12" height="12" viewBox="0 0 12 12">
                <path
                  d="M0.500 2.500l2-2L6 4l3.500-3.500 2 2L8 6l3.500 3.500-2 2L6 8l-3.500 3.500-2-2L4 6z"
                  fill="#fff"
                  stroke="#4a4f5a"
                />
              </svg>
            </button>
          </WindowControls>
        </TitleBar>

        <ImeBar>
          <ImeKey aria-label="输入法">
            <svg width="18" height="18" viewBox="0 0 18 18">
              <rect width="18" height="18" rx="2" fill="#f5560f" />
              <path d="M3 5l12-2M9 4c-1 4-2 7-6 10M7 8l7-1c0 4-1 6-4 7M3 9l4-1" fill="none" stroke="#fff" strokeWidth="1.800" />
            </svg>
          </ImeKey>
          <ImeKey>中</ImeKey>
          <ImeKey aria-label="半角">
            <svg width="14" height="14" viewBox="0 0 14 14">
              <path d="M9 0c6 3 6 10 0 13-3 1-7 1-9-1 7 0 11-5 9-12z" fill="#3f93dd" />
            </svg>
          </ImeKey>
          <ImeKey aria-label="标点">
            <svg width="14" height="14" viewBox="0 0 14 14">
              <circle cx="3" cy="3" r="2" fill="none" stroke="#3f93dd" strokeWidth="1.500" />
              <path d="M8 7a2.500 2.500 0 1 1 5 1c0 3-1 5-4 5 1-1 2-2 2-3-2 0-3-1-3-3z" fill="#3f93dd" />
            </svg>
          </ImeKey>
          <ImeKey aria-label="键盘">
            <svg width="16" height="13" viewBox="0 0 16 13">
              <rect x="0.750" y="0.750" width="14.500" height="11.500" rx="1" fill="none" stroke="#3f93dd" strokeWidth="1.500" />
              <path d="M3 4h10M3 7h10" stroke="#3f93dd" strokeWidth="1.500" strokeDasharray="2 1" />
              <path d="M4 10h8" stroke="#3f93dd" />
            </svg>
          </ImeKey>
          <ImeKey aria-label="用户">
            <svg width="14" height="14" viewBox="0 0 14 14">
              <circle cx="7" cy="4" r="3.500" fill="#d9d9d9" />
              <path d="M1 14c0-7 12-7 12 0z" fill="#d9d9d9" />
            </svg>
          </ImeKey>
          <ImeKey>简</ImeKey>
          <ImeKey aria-label="皮肤">
            <svg width="16" height="13" viewBox="0 0 16 13">
              <path d="M5 0c1 2 5 2 6 0l5 3-2 4-2-1v7H4V6L2 7 0 3z" fill="#3f93dd" />
            </svg>
          </ImeKey>
          <ImeKey aria-label="选项">
            <svg width="16" height="16" viewBox="0 0 16 16">
              <circle cx="8" cy="8" r="4.500" fill="none" stroke="#3f93dd" strokeWidth="3" />
              <circle cx="8" cy="8" r="6.500" fill="none" stroke="#3f93dd" strokeWidth="2" strokeDasharray="3 2.100" />
            </svg>
          </ImeKey>
        </ImeBar>

        <Header>
          <Company>北京北极欧软件有限公司</Company>
          <HeaderActions>
            {[['gear', '设置'], ['lock', '注销'], ['safe', '密码'], ['power', '退出']].map(([k, t]) => (
              <HeaderButton key={k}>
                <HeaderIcon kind={k} />
                {t}
              </HeaderButton>
            ))}
            <HeaderButton aria-label="帮助">
              <HelpIcon />
            </HeaderButton>
            <HeaderButton aria-label="网站">
              <GlobeIcon />
            </HeaderButton>
          </HeaderActions>
        </Header>

        <Body>
          <Sidebar>
            <SideHeader>
              生产制造
              <button aria-label="收起">
                <Chevron d="left" />
              </button>
            </SideHeader>
            <TreeBox>
              <TreeList>
                {tree.map((n) => (
                  <TreeRow key={n.t} $level={n.level} $active={n.active}>
                    {n.level < 2 ? (
                      <TreeToggle aria-label={n.t + '展开'}>
                        <Chevron d={n.open ? 'down' : 'right'} />
                      </TreeToggle>
                    ) : (
                      <TreeToggle as="span" />
                    )}
                    <TreeIcon>
                      {n.active ? <GoIcon /> : n.level === 0 ? <HomeIcon /> : n.level === 1 ? <FolderIcon /> : <DocIcon />}
                    </TreeIcon>
                    <TreeLabel>{n.t}</TreeLabel>
                  </TreeRow>
                ))}
              </TreeList>
              <TreeScroll>
                <ScrollArrow aria-label="向上">
                  <Tri up />
                </ScrollArrow>
                <Spacer $grow={383} />
                <TreeThumb>
                  <svg width="7" height="8" viewBox="0 0 7 8">
                    <path d="M0 1h7M0 4h7M0 7h7" stroke="#7d95b8" />
                  </svg>
                </TreeThumb>
                <Spacer $grow={91} />
                <ScrollArrow aria-label="向下">
                  <Tri />
                </ScrollArrow>
              </TreeScroll>
            </TreeBox>
            <SideNav>
              <NavItem>
                <NavBadge kind="link" />
                {'供\u2002应\u2002链'}
              </NavItem>
              <NavItem $active>
                <NavBadge kind="gear" />
                生产制造
              </NavItem>
              <NavItem>
                <NavBadge kind="heart" />
                财务管理
              </NavItem>
              <NavItem>
                <NavBadge kind="user" />
                人力资源
              </NavItem>
              <NavFooter>
                <button aria-label="配置按钮">
                  <Caret />
                </button>
              </NavFooter>
            </SideNav>
          </Sidebar>
          <Splitter>
            <svg width="3" height="14" viewBox="0 0 3 14">
              <path d="M1.500 0v14" stroke="#8196b6" strokeWidth="2" strokeDasharray="2 2" />
            </svg>
          </Splitter>

          <Main>
            <TabBar>
              {tabs.map(([k, t], i) => (
                <Tab key={t} $active={i === tabs.length - 1}>
                  <TabIcon kind={k} />
                  {t}
                  {i === tabs.length - 1 && (
                    <TabClose>
                      <Cross />
                    </TabClose>
                  )}
                </Tab>
              ))}
              <TabBarClose aria-label="关闭页面">
                <Cross />
              </TabBarClose>
            </TabBar>
            <Workspace>
              <Toolbar>
                {[['setup', '设置'], ['print', '打印'], ['preview', '预览'], ['', ''], ['find', '查询'], ['refresh', '刷新'], ['', ''], ['exit', '退出']].map(
                  ([k, t], i) =>
                    k ? (
                      <ToolButton key={k}>
                        <ToolIcon kind={k} />
                        {t}
                      </ToolButton>
                    ) : (
                      <ToolDivider key={i} />
                    ),
                )}
              </Toolbar>
              <InfoBar>
                <InfoTitle>车间作业费用信息</InfoTitle>
                <InfoGrid>
                  <InfoField>日期:  2019-07-26 - 2019-08-25</InfoField>
                  <InfoField>生产车间:</InfoField>
                  <InfoField $end>工作中心:</InfoField>
                  <InfoField $end>生产线:</InfoField>
                  <InfoField>工序:</InfoField>
                  <InfoField>生产能力:</InfoField>
                  <InfoField $end>班次:</InfoField>
                  <InfoField $end>员工:</InfoField>
                </InfoGrid>
              </InfoBar>
              <GridArea>
                <GridViewport>
                  <Table>
                    <colgroup>
                      {columns.map((c, i) => (
                        <col key={i} width={c} />
                      ))}
                    </colgroup>
                    <thead>
                      <tr>
                        <Th rowSpan={2} />
                        <Th rowSpan={2}>会计期间</Th>
                        <Th rowSpan={2}>工序编号</Th>
                        <Th rowSpan={2}>工序名称</Th>
                        <Th rowSpan={2}>职工编号</Th>
                        <Th rowSpan={2}>职工名称</Th>
                        <Th colSpan={4}>加工信息</Th>
                        <Th rowSpan={2}>费用合计</Th>
                      </tr>
                      <tr>
                        <Th>正品量</Th>
                        <Th>废品量</Th>
                        <Th>正品工时</Th>
                        <Th>废品工时</Th>
                      </tr>
                    </thead>
                    <tbody>
                      {rows.map((r, i) => (
                        <Tr key={i} $selected={i === 4}>
                          <RowMark>
                            {i === 4 && (
                              <svg width="6" height="10" viewBox="0 0 6 10">
                                <path d="M0 0l6 5-6 5z" fill="#000" />
                              </svg>
                            )}
                          </RowMark>
                          <Td>2019年08月</Td>
                          <Td>{r[0]}</Td>
                          <Td>{r[1]}</Td>
                          <Td>{r[2]}</Td>
                          <Td>{r[3]}</Td>
                          <Td $num>{r[4]}</Td>
                          <Td />
                          <Td $num>{r[5]}</Td>
                          <Td />
                          <Td />
                        </Tr>
                      ))}
                    </tbody>
                  </Table>
                </GridViewport>
                <GridScroll>
                  <ScrollArrow aria-label="向上">
                    <Chevron d="up" />
                  </ScrollArrow>
                  <GridThumb />
                  <Spacer $grow={1} />
                  <ScrollArrow aria-label="向下">
                    <Chevron d="down" />
                  </ScrollArrow>
                </GridScroll>
              </GridArea>
              <ChartRow>
                <ChartPanel caption="员工工时统计表" spec={staffChart} />
                <ChartPanel caption="工序工时情况" spec={processChart} />
              </ChartRow>
            </Workspace>
          </Main>
        </Body>

        <StatusBar>
          <StatusCell $min={148}>完毕</StatusCell>
          <StatusCell $min={252}>http://101.254.143.229:82/001 | 运行帐套</StatusCell>
          <StatusCell $min={126}>用户:Admin-管理员</StatusCell>
          <StatusCell $min={129}>操作日期:2019-09-03</StatusCell>
          <StatusCell $right $red $min={84}>
            我的工作
          </StatusCell>
          <StatusCell>
            皮肤:[Office 2010 Blue]
            <Caret />
          </StatusCell>
        </StatusBar>
        <TaskBar>
          <TaskSearch />
          15:00
        </TaskBar>

        <Watermark id="wm1" x={403} y={123} />
        <Watermark id="wm2" x={1268} y={109} />
        <Watermark id="wm3" x={391} y={551} />
        <Watermark id="wm4" x={1314} y={527} />
      </Page>
    </>
  );
}
